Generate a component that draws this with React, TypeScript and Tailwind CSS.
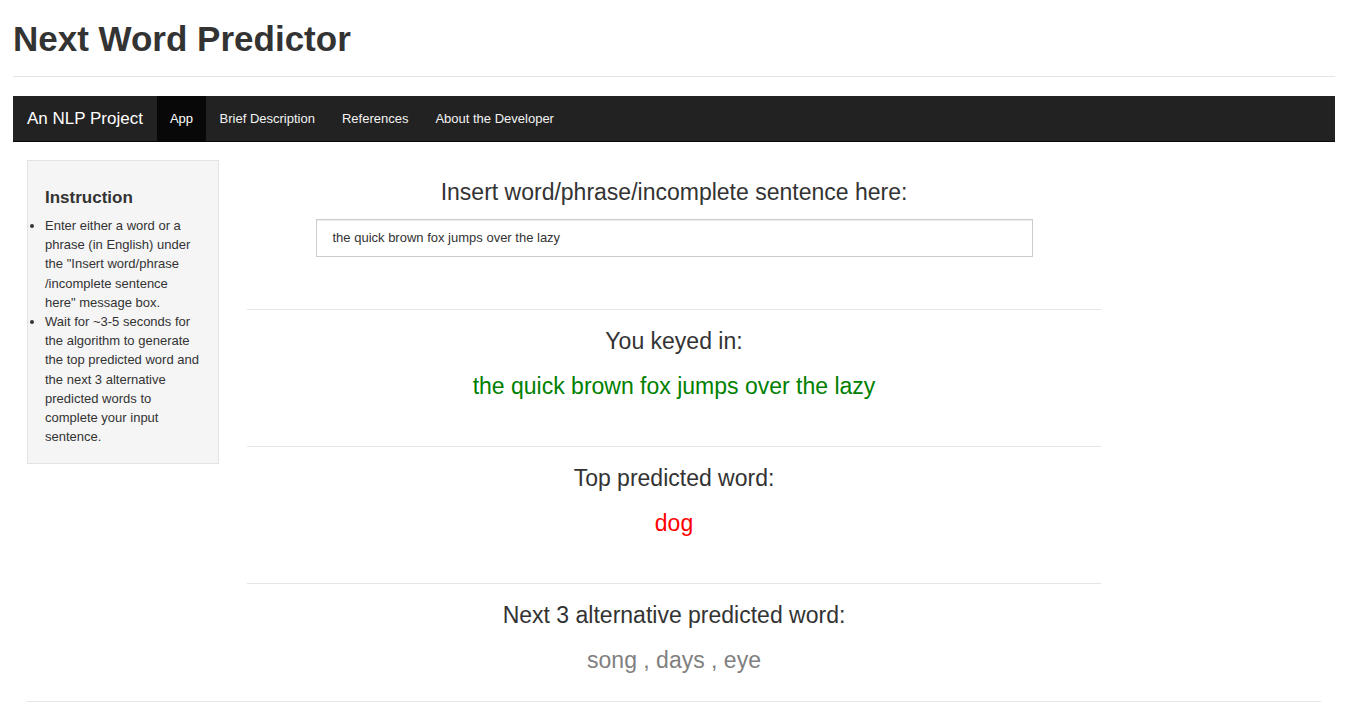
import React from "react";

const Hr = ({ className = "" }: { className?: string }) => (
  <div className={`h-px bg-[#e5e5e5] ${className}`} />
);

function Section({ label, value, color }: { label: string; value: string; color: string }) {
  return (
    <div className="text-center">
      <div className="mt-[19px] text-[23px] leading-[25px] text-[#333]">{label}</div>
      <div className={`mt-[20px] text-[23px] leading-[25px] ${color}`}>{value}</div>
    </div>
  );
}

export default function App() {
  return (
    <div
      className="px-[13px] text-[#333] bg-white min-h-[720px]"
      style={{ fontFamily: '"Liberation Sans", Arial, Helvetica, sans-serif' }}
    >
      <h1 className="pt-[20px] text-[35px] leading-[38px] font-bold text-[#333]">Next Word Predictor</h1>
      <Hr className="mt-[18px]" />

      <nav className="mt-[19px] h-[46px] bg-[#222222] border-b border-[#080808] flex items-stretch text-[13px]">
        <div className="px-[14px] flex items-center text-[17px] text-white">An NLP Project</div>
        <div className="px-[13px] flex items-center bg-[#080808] text-white">App</div>
        <div className="px-[13.5px] flex items-center text-[#f2f2f2]">Brief Description</div>
        <div className="px-[13.5px] flex items-center text-[#f2f2f2]">References</div>
        <div className="px-[13.5px] flex items-center text-[#f2f2f2]">About the Developer</div>
      </nav>

      <div className="flex">
        <div className="w-[220px] px-[14px] pt-[18px] shrink-0">
          <div className="bg-[#f5f5f5] border border-[#e3e3e3] px-[17px] pb-[17px] pt-[17px]">
            <h4 className="mt-[10px] text-[17px] leading-[19px] font-bold text-[#333]">Instruction</h4>
            <ul className="mt-[9px] list-disc pl-0 text-[13px] leading-[19.2px] text-[#333]">
              <li>
                Enter either a word or a phrase (in English) under the "Insert word/phrase /incomplete sentence
                here" message box.
              </li>
              <li>
                Wait for ~3-5 seconds for the algorithm to generate the top predicted word and the next 3
                alternative predicted words to complete your input sentence.
              </li>
            </ul>
          </div>
        </div>

        <div className="w-[882px] px-[14px]">
          <div className="text-center mt-[38px] text-[23px] leading-[25px] text-[#333]">
            Insert word/phrase/incomplete sentence here:
          </div>
          <div className="flex justify-center mt-[14px]">
            <div className="w-[717px] h-[38px] border border-[#cccccc] bg-white flex items-center px-[16px] text-[13px] text-[#333] shadow-[inset_0_1px_1px_rgba(0,0,0,0.075)]">
              the quick brown fox jumps over the lazy
            </div>
          </div>
          <Hr className="mt-[52px]" />
          <Section label="You keyed in:" value="the quick brown fox jumps over the lazy" color="text-[#008000]" />
          <Hr className="mt-[47px]" />
          <Section label="Top predicted word:" value="dog" color="text-[#ff0000]" />
          <Hr className="mt-[47px]" />
          <Section label="Next 3 alternative predicted word:" value="song , days , eye" color="text-[#808080]" />
        </div>
      </div>
      <div className="px-[14px]">
        <Hr className="mt-[28px]" />
      </div>
    </div>
  );
}
